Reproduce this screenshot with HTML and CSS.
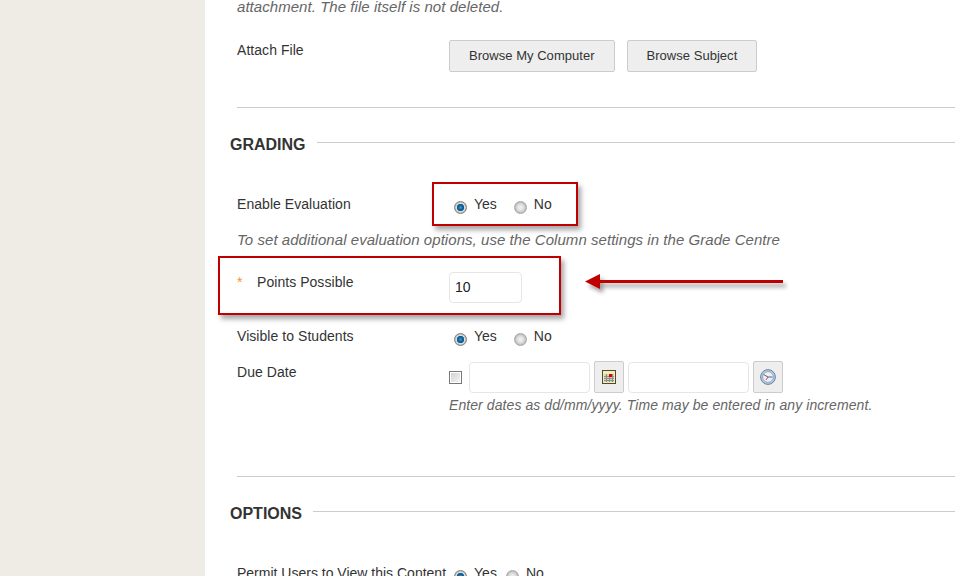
FILE: index.html
```html
<!DOCTYPE html>
<html lang="en">
<head>
<meta charset="utf-8">
<title>Grading</title>
<link rel="stylesheet" href="styles.css">
</head>
<body>
<div class="page">
  <aside class="sidebar"></aside>
  <main class="main">
    <p class="hint hint-top">attachment. The file itself is not deleted.</p>
    <div class="row row-attach">
      <div class="label">Attach File</div>
      <div class="field buttons">
        <button class="btn" type="button">Browse My Computer</button>
        <button class="btn" type="button">Browse Subject</button>
      </div>
    </div>
    <hr class="rule rule-a">
    <h2 class="heading"><span>GRADING</span></h2>
    <div class="row row-enable">
      <div class="label">Enable Evaluation</div>
      <div class="field radios">
        <span class="radio on"></span><span class="opt">Yes</span>
        <span class="radio"></span><span class="opt">No</span>
      </div>
    </div>
    <p class="hint hint-eval">To set additional evaluation options, use the Column settings in the Grade Centre</p>
    <div class="row row-points">
      <div class="label"><span class="req">*</span>Points Possible</div>
      <div class="field"><div class="input points">10</div></div>
    </div>
    <div class="row row-visible">
      <div class="label">Visible to Students</div>
      <div class="field radios">
        <span class="radio on"></span><span class="opt">Yes</span>
        <span class="radio"></span><span class="opt">No</span>
      </div>
    </div>
    <div class="row row-due">
      <div class="label">Due Date</div>
      <div class="field">
        <div class="date-line">
          <span class="check"></span>
          <div class="input date"></div>
          <div class="icon-btn">
            <svg width="14" height="14" viewBox="0 0 14 14">
              <rect x="0.5" y="0.5" width="13" height="13" fill="#fbeda6" stroke="#4a4a44"/>
              <path d="M2 4h10v8H2z" fill="#d6d4c0"/>
              <path d="M2 6.500h10M2 8.500h10M2 10.500h10M4.500 4v8M7.500 4v8M10.500 4v8" stroke="#8f8f84" stroke-width="1"/>
              <rect x="7" y="4" width="3" height="3" fill="#d8001c"/>
            </svg>
          </div>
          <div class="input date"></div>
          <div class="icon-btn">
            <svg width="16" height="16" viewBox="0 0 16 16">
              <circle cx="8" cy="8" r="7.400" fill="#b4cbe4" stroke="#71829b"/>
              <circle cx="8" cy="8" r="5.400" fill="#e9f0f8" stroke="#93a9c4"/>
              <path d="M8 8L3.500 5.500M8 8h4.500" stroke="#5c6478" stroke-width="1"/>
              <path d="M8 8l-2 3" stroke="#d9434a" stroke-width="1"/>
            </svg>
          </div>
        </div>
        <p class="hint-date">Enter dates as dd/mm/yyyy. Time may be entered in any increment.</p>
      </div>
    </div>
    <hr class="rule rule-b">
    <h2 class="heading"><span>OPTIONS</span></h2>
    <div class="row-permit">
      <span class="permit-label">Permit Users to View this Content</span>
      <span class="radio on"></span><span class="opt">Yes</span>
      <span class="radio"></span><span class="opt">No</span>
    </div>

    <div class="mark mark-enable"></div>
    <div class="mark mark-points"></div>
    <svg class="arrow" width="206" height="28" viewBox="0 0 206 28">
      <defs>
        <filter id="arrow-shadow" x="-5%" y="-60%" width="110%" height="220%">
          <feDropShadow dx="3" dy="4" stdDeviation="2" flood-color="#000" flood-opacity="0.4"/>
        </filter>
      </defs>
      <path d="M2 10.500L17 3V9H200V12H17V18Z" fill="#c00000" filter="url(#arrow-shadow)"/>
    </svg>
  </main>
</div>
</body>
</html>
```

FILE: styles.css
```css
html, body {
  margin: 0;
  padding: 0;
  height: 576px;
  overflow: hidden;
  background: #fff;
}
body {
  font-family: "Liberation Sans", Arial, sans-serif;
  font-size: 14px;
  color: #333;
}
.page {
  display: flex;
  height: 576px;
  overflow: hidden;
}
.sidebar {
  width: 205px;
  flex: none;
  background: #efece5;
}
.main {
  position: relative;
  flex: 1;
  min-width: 0;
  padding-left: 32px;
}
.row {
  display: grid;
  grid-template-columns: 212px 1fr;
}
.label {
  line-height: 20px;
  letter-spacing: 0.05px;
}
.hint {
  margin: 0;
  font-size: 15px;
  font-style: italic;
  color: #666;
  line-height: 20px;
  letter-spacing: 0.05px;
}
.hint-top {
  margin-top: -3px;
}
.row-attach {
  margin-top: 23px;
}
.buttons {
  display: flex;
  gap: 12px;
}
.btn {
  height: 32px;
  padding: 0 19px 2px;
  border: 1px solid #ccc;
  border-radius: 2px;
  background: #eee;
  font: 13px "Liberation Sans", Arial, sans-serif;
  letter-spacing: 0.03px;
  color: #333;
}
.rule {
  margin: 0;
  border: 0;
  border-top: 1px solid #ccc;
}
.rule-a {
  margin-top: 35px;
}
.rule-b {
  margin-top: 61px;
}
.heading {
  display: flex;
  align-items: center;
  margin: 27px 0 0 -7px;
  font-size: 16px;
  font-weight: bold;
  line-height: 20px;
  color: #333;
}
.heading::after {
  content: "";
  flex: 1;
  height: 1px;
  background: #ccc;
  margin-left: 11px;
  position: relative;
  top: -3px;
}
.row-enable {
  margin-top: 39px;
}
.radios {
  display: flex;
  align-items: center;
  height: 20px;
  padding-left: 5px;
}
.radio {
  display: inline-block;
  flex: none;
  box-sizing: border-box;
  width: 13px;
  height: 13px;
  border-radius: 50%;
  border: 1px solid #a8a8a8;
  background: radial-gradient(circle closest-side, #f2f2f2 0, #e0e0e0 55%, #bcbcbc 100%);
  position: relative;
  top: 3px;
}
.radio.on {
  background: radial-gradient(circle closest-side, #3f9bcb 0, #0d5c92 45%, #0d5c92 62%, #e2e2e2 72%, #b8b8b8 100%);
  border-color: #808080;
}
.opt {
  margin-left: 7px;
  margin-right: 17px;
  line-height: 20px;
}
.hint-eval {
  margin-top: 16px;
}
.row-points {
  margin-top: 22px;
}
.req {
  display: inline-block;
  width: 20px;
  color: #f7941d;
}
.input {
  box-sizing: border-box;
  height: 31px;
  background: #fff;
  border: 1px solid #e6e6e6;
  border-radius: 4px;
}
.points {
  width: 73px;
  padding-left: 5px;
  line-height: 29px;
  color: #222;
}
.row-visible {
  margin-top: 23px;
}
.row-due {
  margin-top: 16px;
}
.date-line {
  display: flex;
  align-items: center;
  height: 32px;
  margin-top: -1px;
}
.check {
  box-sizing: border-box;
  width: 13px;
  height: 13px;
  border: 1px solid #777;
  background: linear-gradient(135deg, #cfcfcf, #f7f7f7);
  box-shadow: inset 0 0 0 1px #fff;
  margin-right: 7px;
}
.date {
  width: 121px;
  margin-top: 1px;
}
.icon-btn {
  box-sizing: border-box;
  width: 30px;
  height: 32px;
  display: flex;
  align-items: center;
  justify-content: center;
  margin: 0 4px;
  background: #eee;
  border: 1px solid #ccc;
  border-radius: 2px;
}
.hint-date {
  margin: 2px 0 0;
  font-style: italic;
  color: #666;
  line-height: 20px;
  letter-spacing: 0.08px;
}
.row-permit {
  display: flex;
  align-items: center;
  margin-top: 39px;
  line-height: 20px;
}
.permit-label {
  margin-right: 8px;
}
.row-permit .opt {
  margin-right: 9px;
}
.mark {
  position: absolute;
  box-sizing: border-box;
  border: 2px solid #c00000;
  box-shadow: 3px 4px 5px rgba(0, 0, 0, 0.35);
}
.mark-enable {
  left: 227px;
  top: 182px;
  width: 146px;
  height: 44px;
}
.mark-points {
  left: 13px;
  top: 256px;
  width: 343px;
  height: 59px;
}
.arrow {
  position: absolute;
  left: 378px;
  top: 271px;
}
```
